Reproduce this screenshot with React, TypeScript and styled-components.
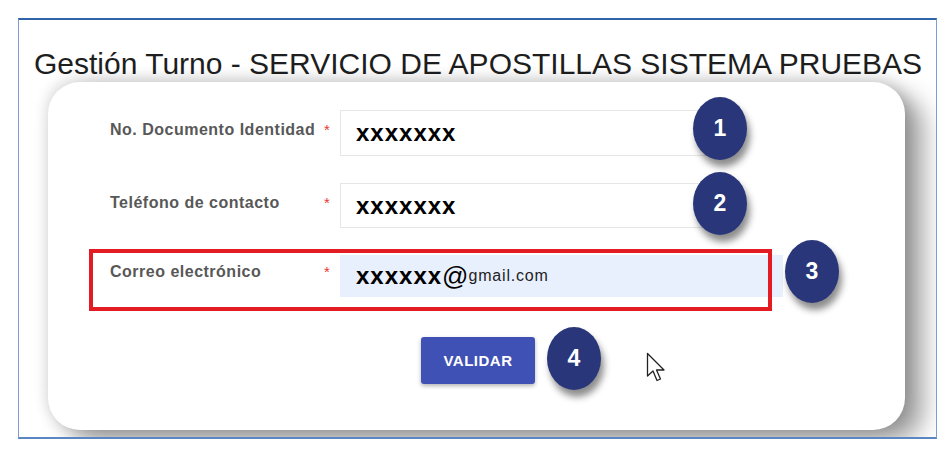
import React from 'react';
import styled, { createGlobalStyle } from 'styled-components';

const GlobalStyle = createGlobalStyle`
    body {
        margin: 0;
        background: #fff;
        font-family: 'Liberation Sans', Arial, sans-serif;
    }
`;

const Frame = styled.section`
    box-sizing: border-box;
    width: 919px;
    height: 421px;
    margin: 18px 0 0 18px;
    border: 1px solid #7d9fcf;
    border-top: 2px solid #2f64a8;
    border-bottom: 2px solid #5a86c3;
    overflow: hidden;
    background: #fff;
`;

const Title = styled.h1`
    margin: 27px 0 0 15px;
    font-size: 30px;
    line-height: 34px;
    font-weight: normal;
    color: #1e1e1e;
    white-space: nowrap;
`;

const Card = styled.div`
    position: relative;
    box-sizing: border-box;
    width: 857px;
    height: 348px;
    margin: 1px 0 0 29px;
    padding: 22px 0 0 41px;
    background: #fff;
    border-radius: 32px;
    box-shadow:
        0 -2px 14px 2px rgba(0, 0, 0, 0.14),
        18px 12px 24px rgba(0, 0, 0, 0.38);
`;

const Row = styled.div<{ $highlight?: boolean }>`
    position: relative;
    box-sizing: border-box;
    display: flex;
    align-items: flex-start;
    width: 683px;
    padding: 6px 0 14px 21px;
    & + & {
        margin-top: 7px;
    }
    &::after {
        content: '';
        position: absolute;
        inset: 0;
        border: 4px solid ${p => (p.$highlight ? '#e31b23' : 'transparent')};
        pointer-events: none;
    }
`;

const Label = styled.label<{ $offset?: number }>`
    flex: 0 0 214px;
    padding-top: ${p => p.$offset ?? 10}px;
    font-size: 16px;
    line-height: 20px;
    font-weight: bold;
    letter-spacing: 0.5px;
    color: #585858;
    white-space: nowrap;
`;

const Req = styled.span<{ $offset?: number }>`
    flex: 0 0 16px;
    padding-top: ${p => (p.$offset ?? 10) + 2}px;
    font-size: 15px;
    line-height: 16px;
    color: #e53935;
`;

const Field = styled.div<{ $width: number; $height: number; $filled?: boolean }>`
    box-sizing: border-box;
    flex: 0 0 ${p => p.$width}px;
    height: ${p => p.$height}px;
    display: flex;
    align-items: center;
    padding-left: 15px;
    background: ${p => (p.$filled ? '#e8f0fe' : '#fff')};
    border: 1px solid ${p => (p.$filled ? '#e8f0fe' : '#e6e6e6')};
    color: #000;
    white-space: nowrap;
`;

const Masked = styled.span`
    font-size: 24px;
    font-weight: bold;
    letter-spacing: 1px;
`;

const At = styled.span`
    font-size: 26px;
`;

const Domain = styled.span`
    font-size: 16px;
    letter-spacing: 0.8px;
    color: #222;
`;

const Button = styled.button`
    display: block;
    width: 114px;
    height: 47px;
    margin: 26px 0 0 332px;
    background: #3f51b5;
    color: #fff;
    border: none;
    border-radius: 3px;
    font-family: 'Liberation Sans', Arial, sans-serif;
    font-size: 15px;
    font-weight: bold;
    letter-spacing: 0.5px;
    box-shadow: 0 2px 4px rgba(0, 0, 0, 0.3);
    cursor: pointer;
`;

const Badge = styled.div<{ $x: number; $y: number }>`
    position: absolute;
    left: ${p => p.$x}px;
    top: ${p => p.$y}px;
    width: 54px;
    height: 63px;
    border-radius: 50%;
    background: #29377a;
    color: #fff;
    display: flex;
    align-items: center;
    justify-content: center;
    font-size: 23px;
    font-weight: bold;
    box-shadow: 3px 7px 7px rgba(0, 0, 0, 0.45);
`;

const Pointer = styled.svg`
    position: absolute;
    left: 598px;
    top: 270px;
`;

export default function App() {
    return (
        <>
            <GlobalStyle />
            <Frame>
                <Title>Gestión Turno - SERVICIO DE APOSTILLAS SISTEMA PRUEBAS</Title>
                <Card>
                    <Row>
                        <Label>No. Documento Identidad</Label>
                        <Req>*</Req>
                        <Field $width={370} $height={46}>
                            <Masked>xxxxxxx</Masked>
                        </Field>
                    </Row>
                    <Row>
                        <Label>Teléfono de contacto</Label>
                        <Req>*</Req>
                        <Field $width={370} $height={45}>
                            <Masked>xxxxxxx</Masked>
                        </Field>
                    </Row>
                    <Row $highlight>
                        <Label $offset={7}>Correo electrónico</Label>
                        <Req $offset={7}>*</Req>
                        <Field $width={443} $height={42} $filled>
                            <Masked>xxxxxx</Masked>
                            <At>@</At>
                            <Domain>gmail.com</Domain>
                        </Field>
                    </Row>
                    <Button>VALIDAR</Button>

                    <Badge $x={645} $y={15}>1</Badge>
                    <Badge $x={645} $y={90}>2</Badge>
                    <Badge $x={737} $y={158}>3</Badge>
                    <Badge $x={499} $y={245}>4</Badge>

                    <Pointer width="22" height="32" viewBox="0 0 22 32">
                        <path
                            d="M1.5 1.5 L1.5 24 L7 19 L11 28.5 L14.5 27 L10.5 18 L18 18 Z"
                            fill="#fff"
                            stroke="#222"
                            strokeWidth="1.3"
                            strokeLinejoin="round"
                        />
                    </Pointer>
                </Card>
            </Frame>
        </>
    );
}
